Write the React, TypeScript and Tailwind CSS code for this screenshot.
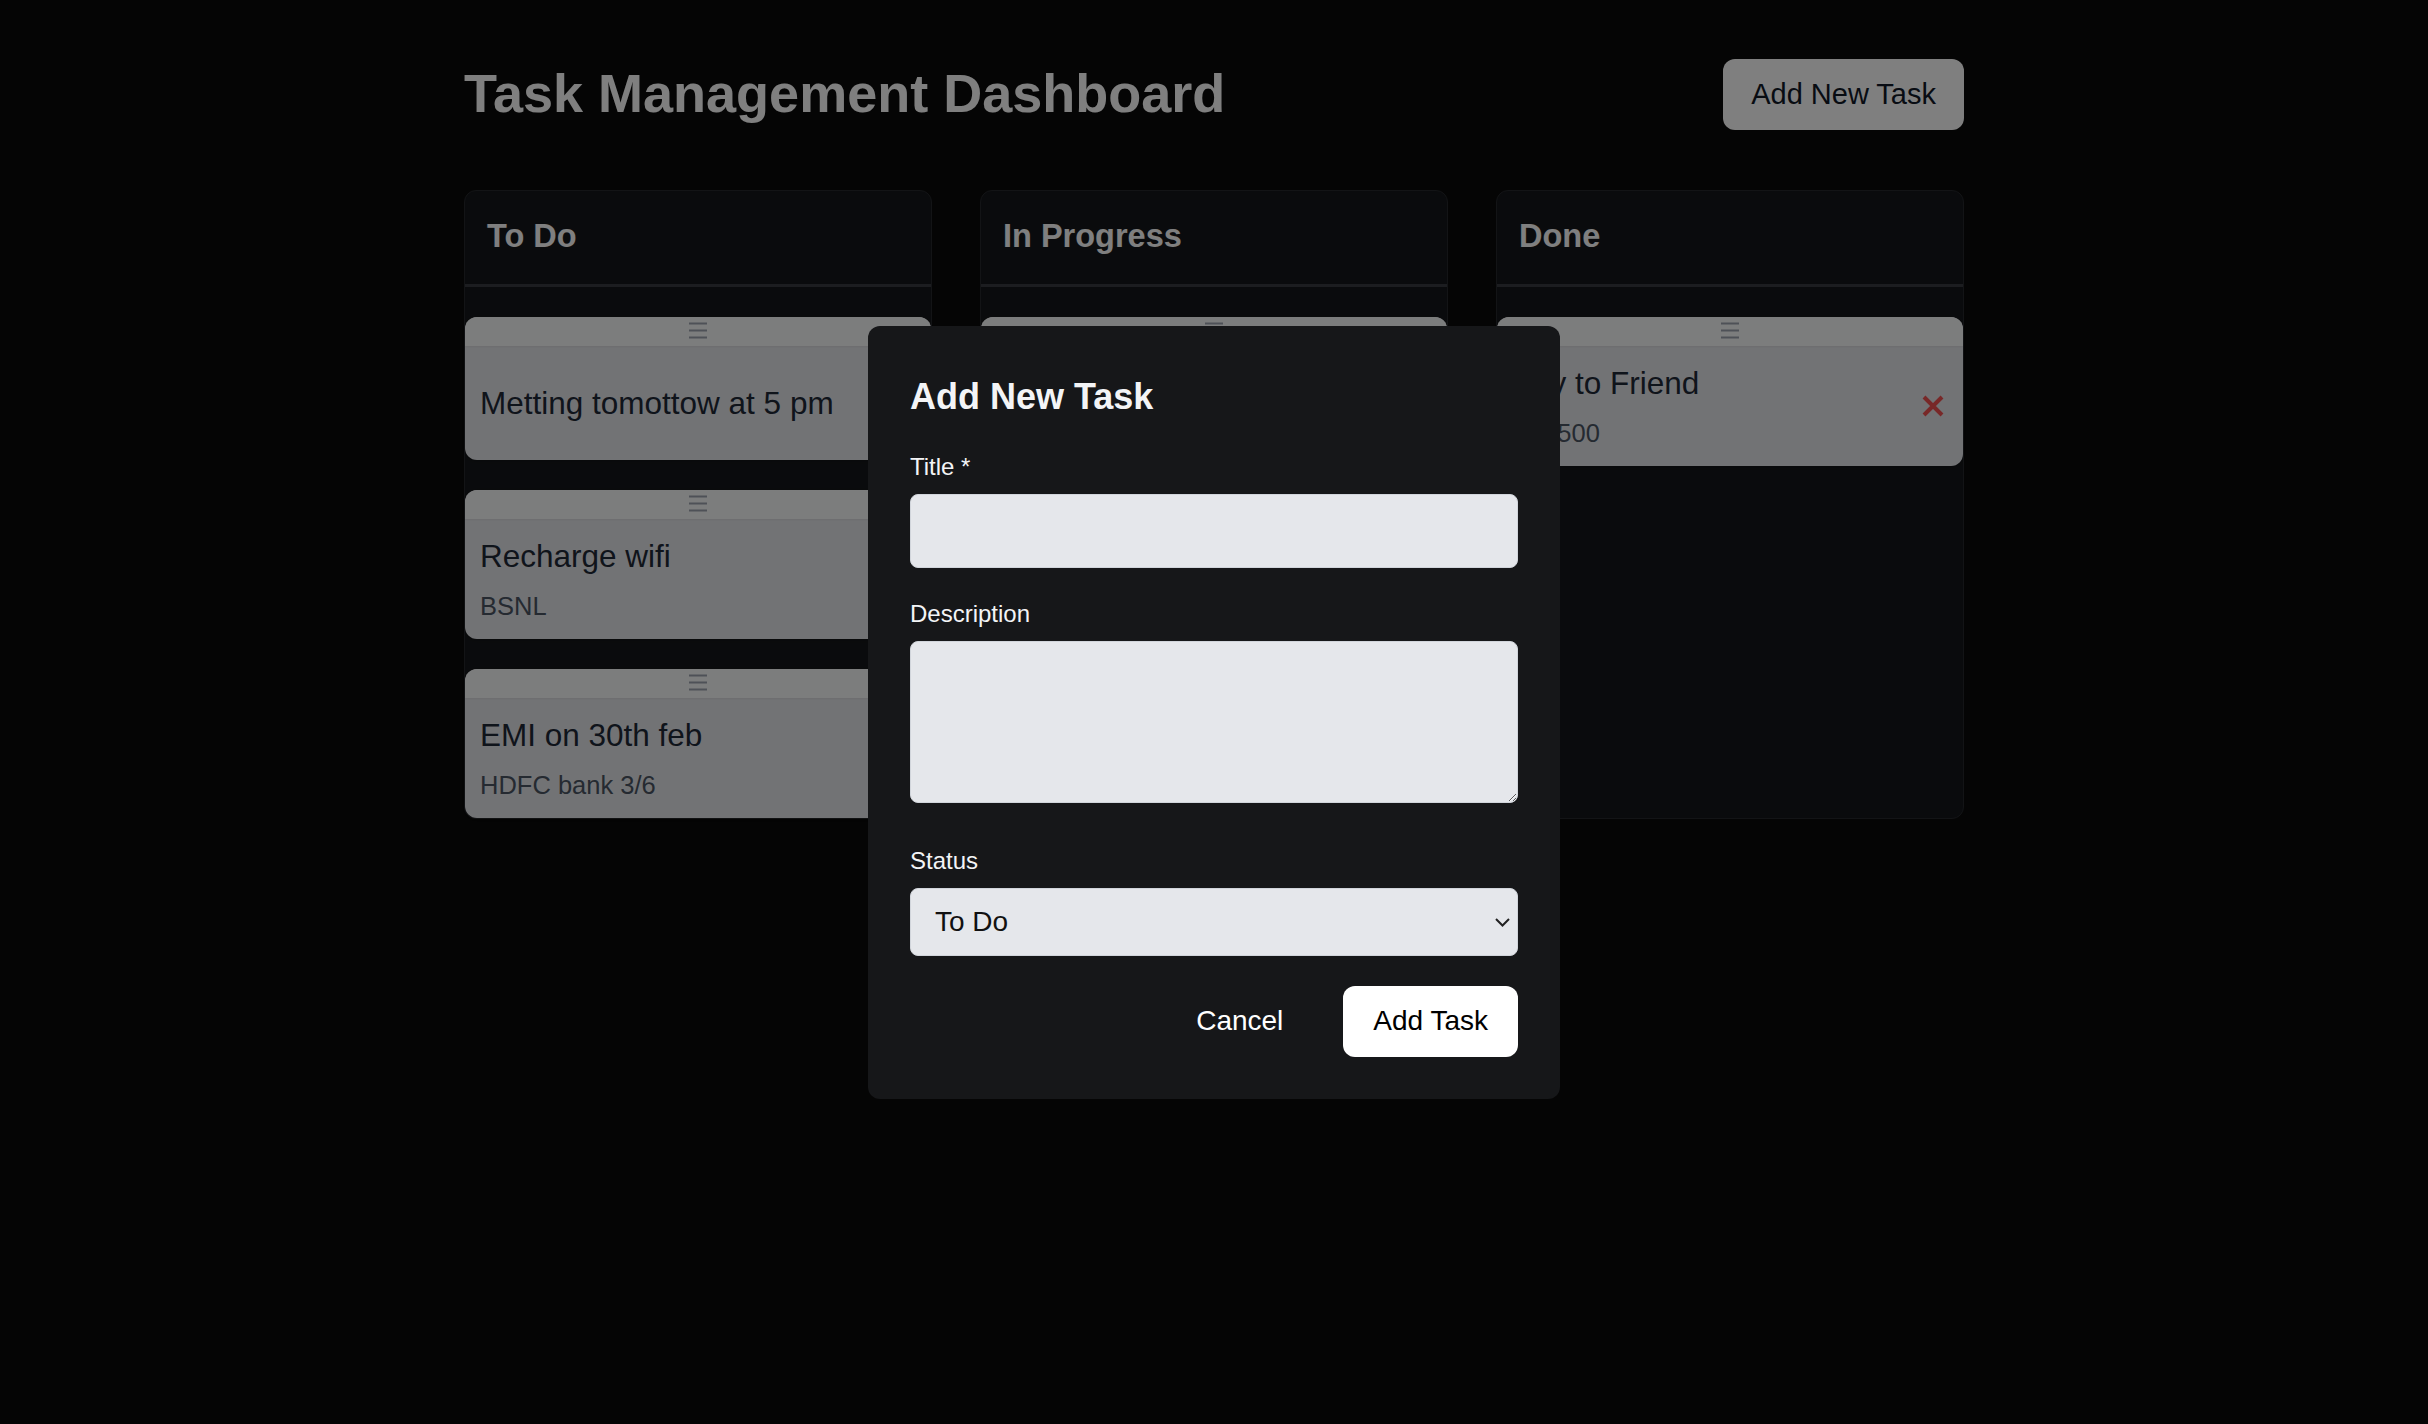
import React from 'react';

type Task = { id: number; title: string; description?: string };

const columns: { name: string; tasks: Task[]; done?: boolean }[] = [
  {
    name: 'To Do',
    tasks: [
      { id: 1, title: 'Metting tomottow at 5 pm' },
      { id: 2, title: 'Recharge wifi', description: 'BSNL' },
      { id: 3, title: 'EMI on 30th feb', description: 'HDFC bank 3/6' },
    ],
  },
  {
    name: 'In Progress',
    tasks: [{ id: 4, title: 'Prepare project report', description: 'Office' }],
  },
  {
    name: 'Done',
    done: true,
    tasks: [{ id: 5, title: 'Pay to Friend', description: 'Rs. 500' }],
  },
];

function Handle() {
  return (
    <div className="flex h-[29px] items-center justify-center bg-[#f9fafb] shadow-[0_1px_2px_rgba(0,0,0,0.06)]">
      <svg width="18" height="17" viewBox="0 0 18 17" className="mt-[-2px]">
        <path d="M0 1.5h18M0 8.5h18M0 15.5h18" stroke="#9ca3af" strokeWidth="2" />
      </svg>
    </div>
  );
}

function TaskCard({ task, done }: { task: Task; done?: boolean }) {
  return (
    <div className="mt-[30px] overflow-hidden rounded-[12px] bg-[#e5e7eb] shadow-sm">
      <Handle />
      <div className="flex min-h-[114px] items-center justify-between px-[15px] py-[15px]">
        <div>
          <h3 className="text-[31.5px] leading-[44px] text-[#1f2937]">{task.title}</h3>
          {task.description && (
            <p className="mt-[10px] text-[25.5px] leading-[36px] text-[#4b5563]">{task.description}</p>
          )}
        </div>
        {done && (
          <button className="mr-[3px] flex h-[24px] w-[24px] items-center justify-center">
            <svg width="24" height="24" viewBox="0 0 24 24">
              <path d="M3 3L21 21M21 3L3 21" stroke="#f05050" strokeWidth="4" />
            </svg>
          </button>
        )}
      </div>
    </div>
  );
}

export default function App() {
  return (
    <div className="min-h-screen bg-[#0a0a0a] font-['Liberation_Sans',Arial,sans-serif]">
      <div className="mx-auto w-[1500px] pt-[59px]">
        <div className="mb-[60px] flex items-center justify-between">
          <h1 className="mb-[3px] text-[54px] font-bold leading-[60px] text-white">Task Management Dashboard</h1>
          <button className="h-[71px] rounded-[12px] bg-white px-[28px] text-[29px] text-[#111827]">
            Add New Task
          </button>
        </div>

        <div className="grid grid-cols-3 gap-[48px]">
          {columns.map((col) => (
            <div key={col.name} className="rounded-[12px] border border-[#26282c] bg-[#15171a]">
              <div className="border-b-[3px] border-[#383a40] px-[22px] pb-[27px] pt-[24px]">
                <h2 className="text-[32.5px] font-bold leading-[42px] text-white">{col.name}</h2>
              </div>
              <div>
                {col.tasks.map((t) => (
                  <TaskCard key={t.id} task={t} done={col.done} />
                ))}
              </div>
            </div>
          ))}
        </div>
      </div>

      <div className="fixed inset-0 flex items-center justify-center bg-black/50">
        <div className="w-[692px] rounded-[12px] bg-[#161719] px-[42px] pb-[42px] pt-[47px]">
          <h2 className="mb-[28px] text-[36px] font-bold leading-[48px] text-[#f3f4f6]">Add New Task</h2>

          <label className="mb-[9px] block text-[24px] leading-[36px] text-[#f3f4f6]">Title *</label>
          <input
            type="text"
            className="mb-[28px] block h-[74px] w-full rounded-[8px] border border-[#d1d5db] bg-[#e5e7eb] px-[24px] text-[28px] text-black outline-none"
          />

          <label className="mb-[9px] block text-[24px] leading-[36px] text-[#f3f4f6]">Description</label>
          <textarea className="mb-[40px] block h-[162px] w-full rounded-[8px] border border-[#d1d5db] bg-[#e5e7eb] px-[24px] py-[12px] text-[28px] text-black outline-none" />

          <label className="mb-[9px] block text-[24px] leading-[36px] text-[#f3f4f6]">Status</label>
          <div className="relative mb-[30px]">
            <select className="block h-[68px] w-full appearance-none rounded-[8px] border border-[#d1d5db] bg-[#e5e7eb] pl-[24px] text-[28px] text-[#111] outline-none">
              <option>To Do</option>
              <option>In Progress</option>
              <option>Done</option>
            </select>
            <svg
              width="15"
              height="9"
              viewBox="0 0 15 9"
              className="pointer-events-none absolute right-[8px] top-[30px]"
            >
              <path d="M1 1l6.5 6.5L14 1" stroke="#222" strokeWidth="2" fill="none" />
            </svg>
          </div>

          <div className="flex justify-end gap-[30px]">
            <button className="h-[71px] px-[30px] text-[28px] text-white">Cancel</button>
            <button className="h-[71px] rounded-[12px] bg-white px-[30px] text-[28px] text-black">Add Task</button>
          </div>
        </div>
      </div>
    </div>
  );
}
